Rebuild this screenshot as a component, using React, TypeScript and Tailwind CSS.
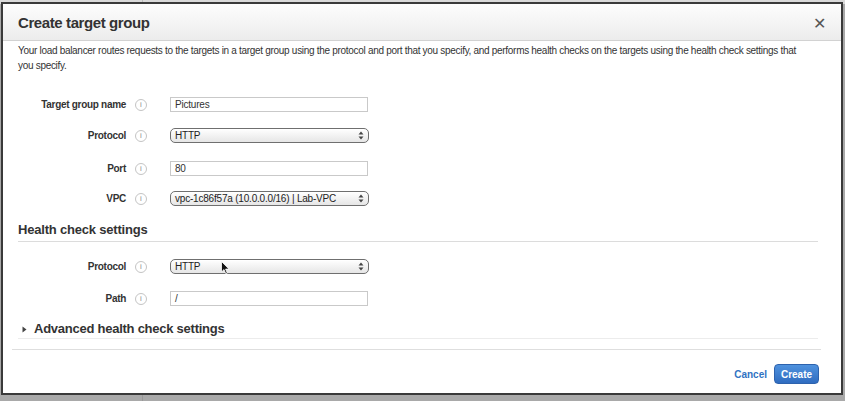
import React from "react";

const font = { fontFamily: '"Liberation Sans", Arial, sans-serif' };

function InfoIcon() {
  return (
    <span className="flex h-[12px] w-[12px] items-center justify-center rounded-full border border-[#c4c4c4] text-[8px] leading-none text-[#8f8f8f]">
      i
    </span>
  );
}

function SelectArrows() {
  return (
    <svg width="6" height="9" viewBox="0 0 6 9" className="shrink-0">
      <path d="M3 0.5 L5.5 3.5 L0.5 3.5 Z" fill="#444" />
      <path d="M3 8.5 L5.5 5.5 L0.5 5.5 Z" fill="#444" />
    </svg>
  );
}

function TextField({ value }: { value: string }) {
  return (
    <div className="flex h-[15px] w-[198px] items-center border border-[#c9c9c9] bg-white px-[4px] text-[10px] tracking-[-0.2px] text-[#333]">
      {value}
    </div>
  );
}

function SelectField({ value }: { value: string }) {
  return (
    <div className="flex h-[15px] w-[199px] items-center justify-between rounded-[5px] border border-[#6f6f6f] bg-gradient-to-b from-white to-[#e6e6e6] pl-[4px] pr-[4px] text-[10px] tracking-[-0.2px] text-[#222] shadow-[inset_0_1px_0_#fff]">
      <span className="leading-none">{value}</span>
      <SelectArrows />
    </div>
  );
}

function Row({
  label,
  children,
  className,
}: {
  label: string;
  children: React.ReactNode;
  className: string;
}) {
  return (
    <div className={`flex h-[15px] items-center ${className}`}>
      <div className="w-[123px] text-right text-[10px] font-bold tracking-[-0.3px] text-[#333]">{label}</div>
      <div className="ml-[9px]">
        <InfoIcon />
      </div>
      <div className="ml-[23px]">{children}</div>
    </div>
  );
}

function Cursor() {
  return (
    <svg width="9" height="14" viewBox="0 0 9 14" className="absolute left-[221px] top-[261px]">
      <path
        d="M0.5 0.5 L0.5 11 L3 8.6 L4.8 12.8 L6.3 12.1 L4.6 8.1 L8 8.1 Z"
        fill="#111"
        stroke="#fff"
        strokeWidth="0.8"
      />
    </svg>
  );
}

export default function App() {
  return (
    <div className="relative h-[401px] w-[845px] overflow-hidden bg-[#a9a9a9]" style={font}>
      {/* page behind the dialog */}
      <div className="absolute left-0 top-0 h-[4px] w-full bg-[#d9d9d9]">
        <div className="absolute left-[142px] top-0 h-full w-px bg-[#bbb]" />
      </div>
      <div className="absolute bottom-0 left-[142px] h-[8px] w-px bg-[#999]" />

      {/* dialog */}
      <div className="absolute left-[1px] top-[2px] flex h-[393px] w-[842px] flex-col border-2 border-[#3a3a3a] bg-white">
        <div className="flex h-[37px] shrink-0 items-center justify-between border-b border-[#d2d2d2] bg-gradient-to-b from-[#fdfdfd] to-[#ececec] pl-[15px] pr-[15px] pt-[3px]">
          <h1 className="text-[15px] font-bold tracking-[-0.4px] text-[#333]">Create target group</h1>
          <span className="text-[16px] leading-none text-[#555]">✕</span>
        </div>

        <p className="mt-[2px] pl-[15px] pr-[28px] text-[10px] leading-[15px] tracking-[-0.3px] text-[#333]">
          Your load balancer routes requests to the targets in a target group using the protocol and port that you
          specify, and performs health checks on the targets using the health check settings that you specify.
        </p>

        <Row label="Target group name" className="mt-[24px]">
          <TextField value="Pictures" />
        </Row>
        <Row label="Protocol" className="mt-[16px]">
          <SelectField value="HTTP" />
        </Row>
        <Row label="Port" className="mt-[18px]">
          <TextField value="80" />
        </Row>
        <Row label="VPC" className="mt-[15px]">
          <SelectField value="vpc-1c86f57a (10.0.0.0/16) | Lab-VPC" />
        </Row>

        <div className="ml-[15px] mr-[23px] mt-[16px] border-b border-[#dcdcdc] pb-[3px]">
          <h2 className="text-[13px] font-bold leading-[16px] tracking-[-0.2px] text-[#333]">Health check settings</h2>
        </div>

        <Row label="Protocol" className="mt-[17px]">
          <SelectField value="HTTP" />
        </Row>
        <Row label="Path" className="mt-[17px]">
          <TextField value="/" />
        </Row>

        <div className="ml-[15px] mr-[23px] mt-[15px] flex items-center border-b border-[#ececec] pb-[1px]">
          <svg width="5" height="7" viewBox="0 0 5 7" className="ml-[4px]">
            <path d="M0.5 0.5 L4.5 3.5 L0.5 6.5 Z" fill="#444" />
          </svg>
          <h2 className="ml-[7px] text-[13px] font-bold leading-[16px] tracking-[-0.25px] text-[#333]">
            Advanced health check settings
          </h2>
        </div>

        <div className="ml-[9px] mr-[20px] mt-[10px] border-b border-[#dedede]" />

        <div className="mr-[22px] mt-[14px] flex items-center justify-end">
          <span className="text-[10px] font-bold text-[#2f73c3]">Cancel</span>
          <button className="ml-[7px] flex h-[20px] w-[45px] items-center justify-center rounded-[4px] border border-[#2d62ad] bg-gradient-to-b from-[#4f92de] to-[#2f6cc0] text-[10px] font-bold text-white">
            Create
          </button>
        </div>
      </div>

      <Cursor />
    </div>
  );
}
